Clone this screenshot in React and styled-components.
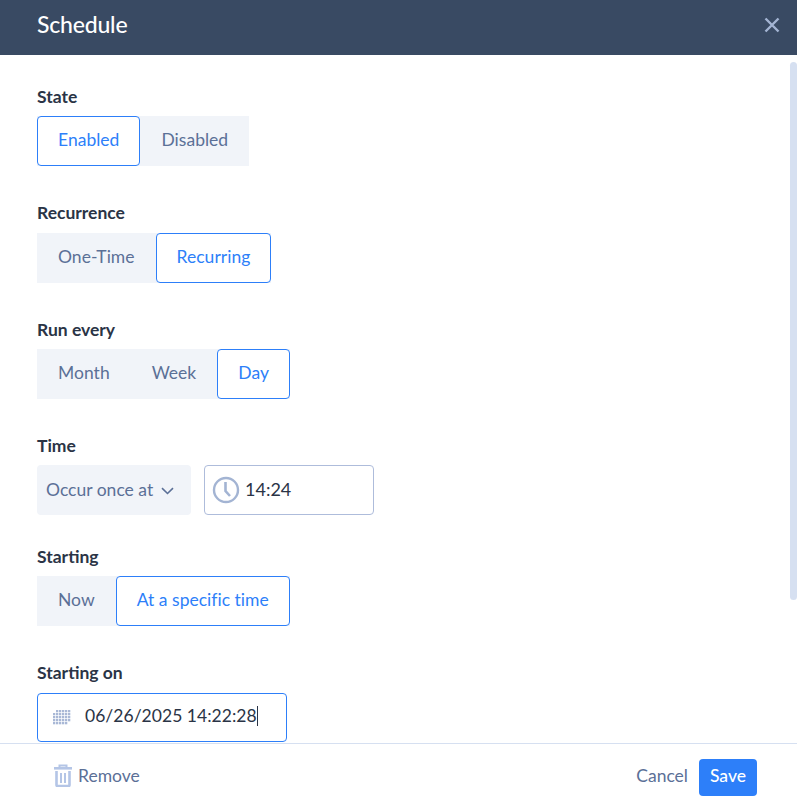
import React from 'react';
import styled, { createGlobalStyle } from 'styled-components';

const Global = createGlobalStyle`
html, body { margin: 0; padding: 0; background: #fff; }
body { font-family: Lato, "Liberation Sans", sans-serif; }
* { box-sizing: border-box; }
`;

const Dialog = styled.div`
width: 797px;
height: 806px;
display: flex;
flex-direction: column;
overflow: hidden;
position: relative;
`;

const Header = styled.header`
height: 55px;
flex: none;
background: #394a63;
display: flex;
align-items: center;
justify-content: space-between;
padding: 0 17px 6px 37px;
`;

const Title = styled.h1`
margin: 0 0 2px;
font-size: 23px;
font-weight: 500;
color: #fff;
letter-spacing: -0.2px;
`;

const Close = styled.button`
border: 0;
background: none;
padding: 0;
display: flex;
margin-top: 6px;
margin-bottom: 6px;
`;

const Body = styled.div`
flex: 1;
overflow: hidden;
padding: 31px 37px 0;
position: relative;
`;

const Thumb = styled.div`
position: absolute;
right: 0;
top: 7px;
width: 7px;
height: 538px;
background: #d6e0f1;
border-radius: 4px;
`;

const Field = styled.div`
margin-bottom: ${(p) => p.$gap}px;
`;

const Label = styled.div`
font-size: 17.5px;
font-weight: 700;
line-height: 20px;
height: 20px;
margin-top: ${(p) => (p.$raised ? 0 : 1)}px;
margin-bottom: ${(p) => (p.$raised ? 10 : 9)}px;
color: #2a3446;
`;

const Group = styled.div`
display: inline-flex;
background: #f1f4f9;
height: 50px;
`;

const Seg = styled.button`
height: 50px;
padding: 0 20px 4px;
font: 400 17.5px Lato, sans-serif;
letter-spacing: 0.02px;
border-radius: 4px;
background: ${(p) => (p.$active ? '#fff' : 'transparent')};
border: 1px solid ${(p) => (p.$active ? '#2d7ff9' : 'transparent')};
color: ${(p) => (p.$active ? '#2d7ff9' : '#5b7097')};
`;

const TimeRow = styled.div`
display: flex;
gap: 13px;
`;

const Select = styled.div`
width: 154px;
height: 50px;
padding: 0 0 2px 9px;
background: #f1f4f9;
border-radius: 4px;
display: flex;
align-items: center;
gap: 8px;
font-size: 17.5px;
color: #5b7097;
`;

const Chevron = styled.svg`
margin-top: 3px;
`;

const TimeInput = styled.div`
width: 170px;
height: 50px;
border: 1px solid #aebcdb;
border-radius: 4px;
display: flex;
align-items: center;
gap: 5px;
padding-left: 7px;
font-size: 18px;
color: #2a3446;
`;

const TimeText = styled.span`
margin-bottom: 2px;
`;

const DateInput = styled.div`
width: 250px;
height: 49px;
border: 1px solid #2d7ff9;
border-radius: 4px;
display: flex;
align-items: center;
gap: 14px;
padding-left: 15px;
font-size: 17.5px;
color: #2a3446;
`;

const DateText = styled.span`
margin-bottom: 5px;
letter-spacing: 0.03px;
`;

const Caret = styled.span`
width: 1px;
height: 20px;
background: #2a3446;
display: inline-block;
vertical-align: -4px;
`;

const Footer = styled.footer`
height: 63px;
flex: none;
border-top: 1px solid #d6e0f1;
display: flex;
align-items: center;
justify-content: space-between;
padding: 1px 40px 0 54px;
background: #fff;
`;

const Remove = styled.div`
display: flex;
align-items: center;
gap: 6px;
font-size: 17.5px;
color: #5b7097;
`;

const RemoveText = styled.span`
margin-bottom: 1px;
`;

const Actions = styled.div`
display: flex;
align-items: center;
gap: 11px;
`;

const Cancel = styled.button`
border: 0;
background: none;
padding: 0;
font: 400 17.5px Lato, sans-serif;
color: #5b7097;
margin-bottom: 1px;
`;

const Save = styled.button`
width: 58px;
height: 37px;
margin-top: 4px;
border: 0;
border-radius: 4px;
background: #2d7ff9;
color: #fff;
font: 500 17.5px Lato, sans-serif;
padding: 0 0 4px;
`;

const dots = [];
for (let y = 0; y < 5; y++) {
  for (let x = 0; x < 6; x++) {
    if ((y === 0 && x === 0) || (y === 4 && x === 5)) continue;
    dots.push(<rect key={`${x}-${y}`} x={x * 3} y={y * 3} width="2.3" height="2.3" fill="#a9b8d6" />);
  }
}

function Segments({ items, active }) {
  return (
    <Group>
      {items.map((item) => (
        <Seg key={item} $active={item === active}>{item}</Seg>
      ))}
    </Group>
  );
}

export default function App() {
  return (
    <Dialog>
      <Global />
      <Header>
        <Title>Schedule</Title>
        <Close>
          <svg width="16" height="16" viewBox="0 0 16 16">
            <path d="M1.5 1.5l13 13M14.5 1.5l-13 13" stroke="#a3b4d3" strokeWidth="2.4" fill="none" />
          </svg>
        </Close>
      </Header>
      <Body>
        <Field $gap={37}>
          <Label>State</Label>
          <Segments items={['Enabled', 'Disabled']} active="Enabled" />
        </Field>
        <Field $gap={37}>
          <Label $raised>Recurrence</Label>
          <Segments items={['One-Time', 'Recurring']} active="Recurring" />
        </Field>
        <Field $gap={37}>
          <Label>Run every</Label>
          <Segments items={['Month', 'Week', 'Day']} active="Day" />
        </Field>
        <Field $gap={32}>
          <Label>Time</Label>
          <TimeRow>
            <Select>
              Occur once at
              <Chevron width="13" height="8" viewBox="0 0 13 8">
                <path d="M1 1.2l5.5 5.3 5.5-5.3" stroke="#5b7097" strokeWidth="1.6" fill="none" />
              </Chevron>
            </Select>
            <TimeInput>
              <svg width="28" height="28" viewBox="0 0 28 28">
                <circle cx="14" cy="14" r="12" stroke="#a3b4d3" strokeWidth="2.4" fill="none" />
                <path d="M13.5 6v9l4.5 5" stroke="#a3b4d3" strokeWidth="2.6" fill="none" />
              </svg>
              <TimeText>14:24</TimeText>
            </TimeInput>
          </TimeRow>
        </Field>
        <Field $gap={37}>
          <Label>Starting</Label>
          <Segments items={['Now', 'At a specific time']} active="At a specific time" />
        </Field>
        <Field $gap={0}>
          <Label $raised>Starting on</Label>
          <DateInput>
            <svg width="18" height="15" viewBox="0 0 18 15">{dots}</svg>
            <DateText>06/26/2025 14:22:28<Caret /></DateText>
          </DateInput>
        </Field>
        <Thumb />
      </Body>
      <Footer>
        <Remove>
          <svg width="18" height="23" viewBox="0 0 18 23">
            <path d="M5.5 3.5V1.5h7v2" stroke="#b4c5e6" strokeWidth="2" fill="none" />
            <path d="M0 3h18v2.6H0z" fill="#b4c5e6" />
            <path d="M2.5 7v14a1 1 0 0 0 1 1h11a1 1 0 0 0 1-1V7" stroke="#b4c5e6" strokeWidth="2.6" fill="none" />
            <path d="M7 9v10M11 9v10" stroke="#b4c5e6" strokeWidth="2" fill="none" />
          </svg>
          <RemoveText>Remove</RemoveText>
        </Remove>
        <Actions>
          <Cancel>Cancel</Cancel>
          <Save>Save</Save>
        </Actions>
      </Footer>
    </Dialog>
  );
}
